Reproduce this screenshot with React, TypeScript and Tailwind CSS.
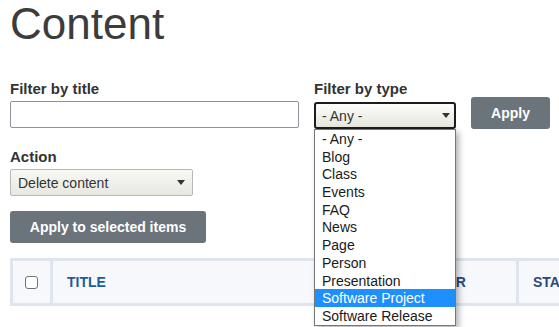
import React from "react";

const options = [
  "- Any -",
  "Blog",
  "Class",
  "Events",
  "FAQ",
  "News",
  "Page",
  "Person",
  "Presentation",
  "Software Project",
  "Software Release",
];

function Arrow() {
  return (
    <svg width="8" height="5" viewBox="0 0 8 5" className="block">
      <polygon points="0,0 8,0 4,5" fill="#333333" />
    </svg>
  );
}

export default function App() {
  return (
    <div className="relative w-[559px] h-[327px] overflow-hidden bg-white font-['Liberation_Sans',Arial,sans-serif]">
      <div className="pl-[10px]">
        <h1 className="mt-[-2px] text-[44px] leading-[52px] font-normal text-[#3c3c3c]">Content</h1>

        <div className="mt-[29px] flex items-start">
          <div className="w-[289px]">
            <label className="block text-[15px] leading-[20px] font-bold text-[#333333]">Filter by title</label>
            <div className="mt-[2px] h-[27px] rounded-[2px] border border-[#8e929c] bg-white" />
          </div>

          <div className="relative ml-[15px] w-[142px]">
            <label className="block text-[15px] leading-[20px] font-bold text-[#333333]">Filter by type</label>
            <div className="mt-[3px] flex h-[27px] items-center justify-between rounded-[3px] border-2 border-[#1c1c1c] bg-linear-to-b from-[#fdfdfb] to-[#e6e6de] pl-[6px] pr-[4px]">
              <span className="text-[14px] leading-[16px] text-[#333333]">- Any -</span>
              <Arrow />
            </div>
            <div className="absolute left-0 top-full z-10 w-[142px] border border-[#767676] bg-white shadow-[3px_3px_6px_rgba(0,0,0,0.3)]">
              {options.map((o) => (
                <div
                  key={o}
                  className={
                    o === "Software Project"
                      ? "flex h-[17.73px] items-center bg-[#1e8fff] pl-[7px] text-[14px] leading-[16px] text-white"
                      : "flex h-[17.73px] items-center pl-[7px] text-[14px] leading-[16px] text-[#1a1a1a]"
                  }
                >
                  {o}
                </div>
              ))}
            </div>
          </div>

          <button className="ml-[15px] mt-[18px] h-[32px] w-[79px] rounded-[3px] bg-[#6b737b] text-[14px] font-bold text-white">
            Apply
          </button>
        </div>

        <label className="mt-[18px] block text-[15px] leading-[20px] font-bold text-[#333333]">Action</label>
        <div className="mt-[2px] flex h-[27px] w-[183px] items-center justify-between rounded-[2px] border border-[#b9b9b3] bg-linear-to-b from-[#f8f8f5] to-[#e8e8e1] pl-[7px] pr-[7px]">
          <span className="text-[14px] leading-[16px] text-[#333333]">Delete content</span>
          <Arrow />
        </div>

        <button className="mt-[15px] block h-[32px] w-[196px] rounded-[3px] bg-[#6b737b] text-[14px] font-bold text-white">
          Apply to selected items
        </button>

        <div className="mt-[15px] flex h-[48px] w-max border-y-[3px] border-[#dfe5ee] bg-[#f6f8fb]">
          <div className="flex w-[40px] shrink-0 items-center justify-center border-l-[3px] border-[#dfe5ee]">
            <span className="block h-[13px] w-[13px] rounded-[3px] border border-[#727272] bg-white" />
          </div>
          <div className="flex w-[270px] shrink-0 items-center border-l-[3px] border-[#dfe5ee] pl-[14px] text-[14px] font-bold text-[#1f5b98]">
            TITLE
          </div>
          <div className="w-[69px] shrink-0 border-l-[3px] border-[#dfe5ee]" />
          <div className="flex w-[127px] shrink-0 items-center border-l-[3px] border-[#dfe5ee] pl-[14px] text-[14px] font-bold text-[#2b4a78]">
            AUTHOR
          </div>
          <div className="flex w-[150px] shrink-0 items-center border-l-[3px] border-[#dfe5ee] pl-[14px] text-[14px] font-bold text-[#2b4a78]">
            STATUS
          </div>
        </div>
      </div>
    </div>
  );
}
